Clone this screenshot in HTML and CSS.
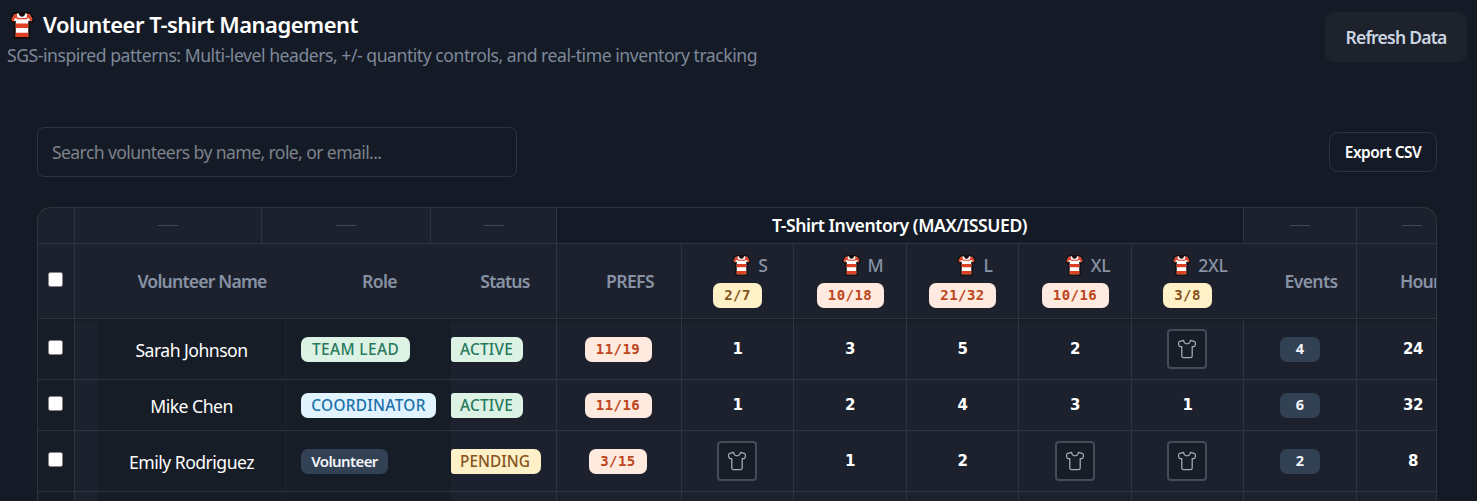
FILE: index.html
```html
<!DOCTYPE html>
<html lang="en">
<head>
<meta charset="utf-8">
<title>Volunteer T-shirt Management</title>
<link rel="stylesheet" href="styles.css">
</head>
<body>
<svg width="0" height="0" class="defs">
  <symbol id="jersey" viewBox="0 0 24 26">
    <path d="M4 1.5 8 .8h8l4 .7 3 5.5-1.5 3-2.500-.4V25H5V9.600l-2.500.4L1 7z" fill="#160b0a" stroke="#160b0a" stroke-width="1.600" stroke-linejoin="round"/>
    <path d="M4.500 2.300 8 1.500h8l3.500.8L22 7l-1 2-3-.6V24H6V8.400L3 9 2 7z" fill="#fff"/>
    <path d="M4.500 2.300 7 1.700 7.500 6H5L4.300 8.700 3 9 2 7zM19.500 2.300 17 1.700 16.500 6H19l.7 2.700L21 9l1-2zM6 11h12v4.300H6zM6 20h12v4H6z" fill="#df4024"/>
    <path d="M7 5.500h10V7H7z" fill="#df4024"/>
    <path d="M8.500 1h7C15 6 9 6 8.500 1z" fill="#160b0a"/>
    <path d="M8.300 1.500C9 6.500 15 6.500 15.700 1.500" fill="none" stroke="#fff" stroke-width="1.200"/>
  </symbol>
  <symbol id="shirt" viewBox="0 0 20 20">
    <path d="M6.600 1.300 2.800 2.400Q1.200 3 1.500 4.700L2 6.700Q2.200 7.500 3 7.500H4.800V17Q4.800 18.500 6.300 18.500H13.700Q15.200 18.500 15.200 17V7.500H17Q17.800 7.500 18 6.700L18.500 4.700Q18.800 3 17.200 2.400L13.400 1.300C13 6 7 6 6.600 1.300Z" fill="none" stroke="currentColor" stroke-width="1.250" stroke-linejoin="round"/>
  </symbol>
</svg>
<header class="top">
  <div>
    <h1 class="title"><svg class="title-icon"><use href="#jersey"/></svg><span>Volunteer T-shirt Management</span></h1>
    <p class="subtitle">SGS-inspired patterns: Multi-level headers, +/- quantity controls, and real-time inventory tracking</p>
  </div>
  <button class="refresh"><span>Refresh Data</span></button>
</header>
<main class="content">
  <div class="tools">
    <input class="search" type="text" placeholder="Search volunteers by name, role, or email...">
    <button class="export"><span>Export CSV</span></button>
  </div>
  <section class="table">
    <div class="row groups">
      <div></div><div><i class="dash"></i></div><div><i class="dash"></i></div><div><i class="dash"></i></div>
      <div class="inventory"><span>T-Shirt Inventory (MAX/ISSUED)</span></div>
      <div><i class="dash"></i></div><div class="last"><i class="dash"></i></div>
    </div>
    <div class="row heads">
      <div class="check"><input type="checkbox"></div>
      <div class="people"><span class="h-name">Volunteer Name</span><span class="h-role">Role</span><span class="h-status">Status</span></div>
      <div class="label"><span class="h-prefs">PREFS</span></div>
      <div class="size"><p><svg><use href="#jersey"/></svg><b>S</b></p><span class="pill yellow mono short">2/7</span></div>
      <div class="size"><p><svg><use href="#jersey"/></svg><b>M</b></p><span class="pill orange mono">10/18</span></div>
      <div class="size"><p><svg><use href="#jersey"/></svg><b>L</b></p><span class="pill orange mono">21/32</span></div>
      <div class="size"><p><svg><use href="#jersey"/></svg><b>XL</b></p><span class="pill orange mono">10/16</span></div>
      <div class="size open"><p><svg><use href="#jersey"/></svg><b>2XL</b></p><span class="pill yellow mono short">3/8</span></div>
      <div class="label events"><span>Events</span></div>
      <div class="hours"><span>Hours</span></div>
    </div>
    <div class="row data">
      <div class="check"><input type="checkbox"></div><div class="strip"></div>
      <div class="name"><span>Sarah Johnson</span></div>
      <div class="role"><span class="pill green lead">TEAM LEAD</span></div>
      <div class="status"><span class="pill green active">ACTIVE</span></div>
      <div class="prefs"><span class="pill orange mono">11/19</span></div>
      <div class="num">1</div><div class="num">3</div><div class="num">5</div><div class="num">2</div>
      <div class="empty"><button class="add"><svg><use href="#shirt"/></svg></button></div>
      <div><span class="pill slate count">4</span></div><div class="num last">24</div>
    </div>
    <div class="row data compact">
      <div class="check"><input type="checkbox"></div><div class="strip"></div>
      <div class="name"><span>Mike Chen</span></div>
      <div class="role"><span class="pill blue coord">COORDINATOR</span></div>
      <div class="status"><span class="pill green active">ACTIVE</span></div>
      <div class="prefs"><span class="pill orange mono">11/16</span></div>
      <div class="num">1</div><div class="num">2</div><div class="num">4</div><div class="num">3</div><div class="num">1</div>
      <div><span class="pill slate count">6</span></div><div class="num last">32</div>
    </div>
    <div class="row data">
      <div class="check"><input type="checkbox"></div><div class="strip"></div>
      <div class="name"><span>Emily Rodriguez</span></div>
      <div class="role"><span class="pill slate vol">Volunteer</span></div>
      <div class="status"><span class="pill yellow pending">PENDING</span></div>
      <div class="prefs"><span class="pill orange mono mid">3/15</span></div>
      <div class="empty"><button class="add"><svg><use href="#shirt"/></svg></button></div>
      <div class="num">1</div><div class="num">2</div>
      <div><button class="add"><svg><use href="#shirt"/></svg></button></div>
      <div class="empty"><button class="add"><svg><use href="#shirt"/></svg></button></div>
      <div><span class="pill slate count">2</span></div><div class="num last">8</div>
    </div>
    <div class="row data partial">
      <div class="check"></div><div class="strip"></div><div class="name"></div><div class="role"></div><div class="status"></div>
      <div></div><div></div><div></div><div></div><div></div><div></div><div></div><div class="last"></div>
    </div>
  </section>
</main>
</body>
</html>
```
FILE: styles.css
```css
:root { --bg: #151b26; --panel: #1d212d; --line: #2e343f; --muted: #8792a4; }
* { box-sizing: border-box; margin: 0; padding: 0; }
body { height: 501px; overflow: hidden; background: var(--bg); color: #fff; font-family: "Noto Sans", sans-serif; font-size: 17.600px; }
button, input { font-family: inherit; }
span, b { white-space: nowrap; }
.defs { display: block; height: 0; }

.top { display: flex; justify-content: space-between; padding: 12px 10px 0 7px; height: 127px; }
.title { display: flex; align-items: center; height: 26px; gap: 8px; padding-left: 2px; font-size: 22px; font-weight: 600; letter-spacing: -.5px; }
.title span { padding-bottom: 2px; }
.title-icon { width: 26px; height: 27px; }
.subtitle { margin-top: 4px; line-height: 26px; color: #7e8899; letter-spacing: -.465px; white-space: nowrap; }
.refresh { width: 142px; height: 50px; border: 0; border-radius: 9px; background: #1d222d; color: #cbd5e1; font-size: 17.600px; font-weight: 600; letter-spacing: -.8px; }

.content { padding: 0 40px 0 37px; }
.tools { display: flex; align-items: center; justify-content: space-between; height: 50px; }
.search { width: 480px; height: 50px; padding: 0 14px; border: 1px solid var(--line); border-radius: 7px; background: transparent; color: #fff; font-size: 17.600px; letter-spacing: -.61px; }
.search::placeholder { color: #7d828b; }
.export { width: 108px; height: 40px; border: 1px solid var(--line); border-radius: 9px; background: transparent; color: #fff; font-size: 15.400px; font-weight: 600; letter-spacing: -.5px; }

.table { margin-top: 30px; width: 1400px; height: 294px; border: 1px solid var(--line); border-bottom: 0; border-radius: 14px 14px 0 0; overflow: hidden; background: var(--panel); }
.row { display: grid; }
.row > div { display: flex; align-items: center; justify-content: center; min-width: 0; border-right: 1px solid var(--line); border-bottom: 1px solid var(--line); }
.row > .last { border-right: 0; justify-content: flex-start; }
.groups { height: 36px; grid-template-columns: 37px 187px 169px 126px 687px 113px 79px; }
.dash { width: 20px; height: 1px; background: #3f4860; }
.groups .last { padding-left: 45px; }
.inventory { background: var(--bg); font-weight: 600; letter-spacing: -.44px; }
.inventory span { padding-bottom: 1px; }
.row > .inventory { padding-right: 1px; }
.heads { height: 75px; grid-template-columns: 37px 482px 125px 112px 113px 112px 113px 112px 113px 79px; color: var(--muted); font-weight: 600; letter-spacing: -.8px; }
.check input { appearance: none; width: 15px; height: 15px; margin: 0 2px 3px 0; border: 1px solid #858585; border-radius: 2.500px; background: #fff; }
.row > .people { display: grid; grid-template-columns: 255px 100px 127px; text-align: center; }
.h-role, .h-prefs { letter-spacing: -.6px; }
.h-status { padding-left: 24px; }
.label { padding-left: 22px; }
.events { letter-spacing: -.65px; }
.row > .size { flex-direction: column; gap: 4px; padding-bottom: 1px; }
.size p { display: flex; align-items: center; gap: 7px; height: 25px; padding: 0 1px 2px 26px; }
.size svg { width: 19px; height: 21px; }
.size b { font-weight: 500; letter-spacing: -.3px; }
.row > .open { border-right-color: transparent; background-clip: padding-box; }
.row > .hours { justify-content: flex-start; padding-left: 43px; border-right: 0; overflow: hidden; }

.data { height: 61px; grid-template-columns: 37px 23px 188px 165px 106px 125px 112px 113px 112px 113px 112px 113px 79px; }
.heads + .data { box-shadow: inset 0 3px 3px -2px #151923; }
.compact { height: 51px; }
.partial { height: 10px; }
.row.partial > div { border-bottom: 0; }
.data > .check, .data > .name, .data > .role { background: #171d26; }
.data > .strip { border-right: 0; }
.data > .name { border-right-color: #1e232e; padding-top: 2px; }
.data > .role { border-right: 0; justify-content: flex-start; padding-left: 15px; }
.data > .status { justify-content: flex-start; }
.data > .prefs, .data > .empty { padding-right: 2px; }
.name span { letter-spacing: -.52px; }
.num { font-family: "DejaVu Sans", sans-serif; font-size: 15px; font-weight: 700; letter-spacing: -.4px; }
.row > .num.last { justify-content: center; padding: 0 0 0 33px; }

.pill { display: flex; align-items: center; justify-content: center; height: 25px; border-radius: 7px; font-size: 15.400px; font-weight: 500; }
.green { background: #dcf2e5; color: #28795a; }
.yellow { background: #fef1c7; color: #85541c; }
.orange { background: #feeadf; color: #bd461c; }
.blue { background: #e1f3fe; color: #1a70a8; }
.slate { background: #334155; color: #f1f5f9; font-weight: 600; }
.mono { width: 67px; font-family: "DejaVu Sans Mono", monospace; font-size: 14px; font-weight: 700; letter-spacing: .45px; }
.short { width: 49px; }
.mid { width: 58px; }
.lead { width: 109px; letter-spacing: .4px; }
.coord { width: 135px; letter-spacing: .3px; }
.vol { width: 87px; font-size: 15px; letter-spacing: -.6px; }
.active { width: 72px; padding-right: 1px; border-radius: 3px 7px 7px 3px; letter-spacing: .25px; }
.pending { width: 90px; padding-right: 2px; border-radius: 3px 7px 7px 3px; letter-spacing: .05px; }
.count { width: 40px; padding-bottom: 3px; font-size: 14.500px; font-weight: 700; }
.add { display: flex; align-items: center; justify-content: center; width: 40px; height: 40px; border: 2px solid #434c5b; border-radius: 4px; background: #171c26; color: #a4adba; }
.add svg { width: 20px; height: 20px; }
```
